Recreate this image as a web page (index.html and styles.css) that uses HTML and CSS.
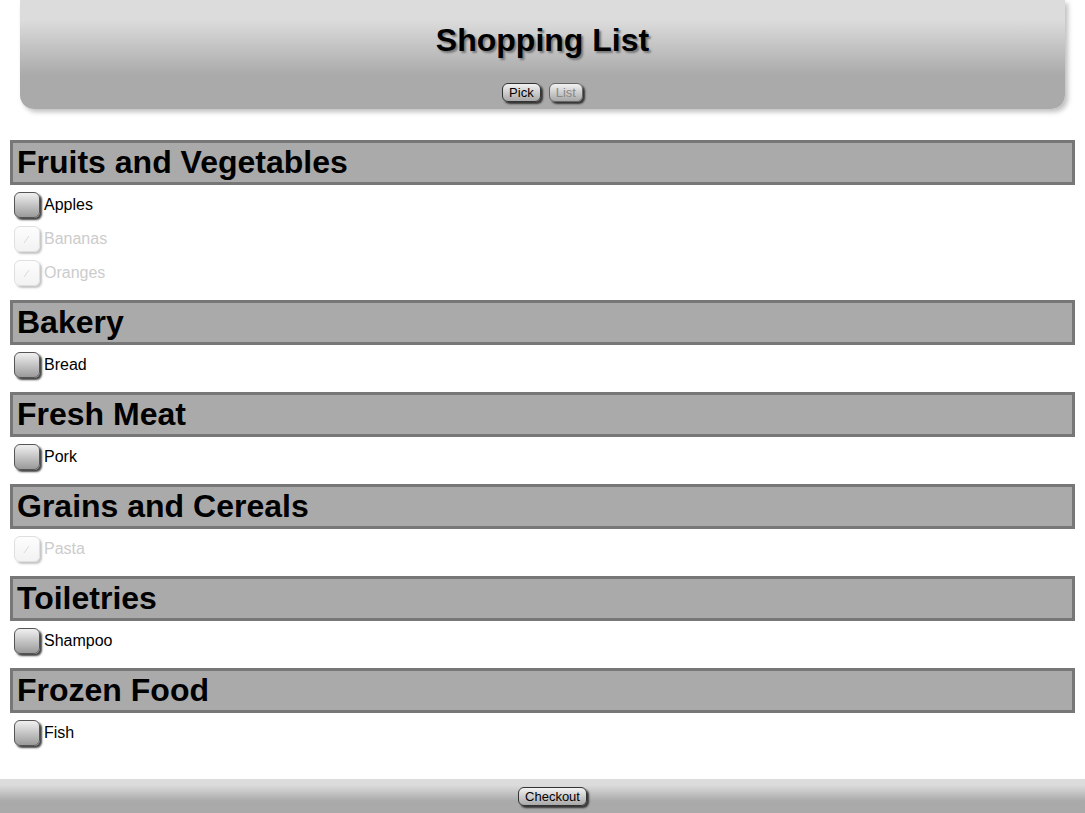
FILE: index.html
```html
<!DOCTYPE html>
<html>

<head>
    <title>Shopping List</title>
    <link rel="stylesheet" href="styles.css">
</head>

<body>
    <div class="header">
        <h1>Shopping List</h1>
        <div class="nav">
            <span class="btn">Pick</span>
            <span class="btn off">List</span>
        </div>
    </div>

    <div class="content">
        <div class="group">
            <h2>Fruits and Vegetables</h2>
            <ul>
                <li><span class="check"></span>Apples</li>
                <li class="done"><span class="check"><svg width="26" height="26" viewBox="0 0 26 26"><line x1="10" y1="17" x2="15" y2="10" /></svg></span>Bananas</li>
                <li class="done"><span class="check"><svg width="26" height="26" viewBox="0 0 26 26"><line x1="10" y1="17" x2="15" y2="10" /></svg></span>Oranges</li>
            </ul>
        </div>
        <div class="group">
            <h2>Bakery</h2>
            <ul>
                <li><span class="check"></span>Bread</li>
            </ul>
        </div>
        <div class="group">
            <h2>Fresh Meat</h2>
            <ul>
                <li><span class="check"></span>Pork</li>
            </ul>
        </div>
        <div class="group">
            <h2>Grains and Cereals</h2>
            <ul>
                <li class="done"><span class="check"><svg width="26" height="26" viewBox="0 0 26 26"><line x1="10" y1="17" x2="15" y2="10" /></svg></span>Pasta</li>
            </ul>
        </div>
        <div class="group">
            <h2>Toiletries</h2>
            <ul>
                <li><span class="check"></span>Shampoo</li>
            </ul>
        </div>
        <div class="group">
            <h2>Frozen Food</h2>
            <ul>
                <li><span class="check"></span>Fish</li>
            </ul>
        </div>
    </div>

    <div class="footer">
        <span class="btn">Checkout</span>
    </div>
</body>

</html>
```

FILE: styles.css
```css
* {
    margin: 0;
    padding: 0;
}

li {
    list-style-type: none;
}

html,
body {
    height: 100%;
}

body {
    display: flex;
    flex-direction: column;
    font-family: "Liberation Sans", Arial, sans-serif;
    background-color: #fff;
    color: #000;
}

.header {
    margin: 0 20px;
    padding-top: 22px;
    padding-bottom: 7px;
    text-align: center;
    border-radius: 0 0 14px 14px;
    background: linear-gradient(to bottom, #dcdcdc 0, #dcdcdc 20px, #aaaaaa 75px, #aaaaaa 100%);
    box-shadow: 3px 3px 5px rgba(0, 0, 0, 0.25);
}

.header h1 {
    font-size: 32px;
    line-height: 36px;
    font-weight: bold;
    text-shadow: 2px 2px 2px #777;
}

.nav {
    margin-top: 25px;
    display: flex;
    justify-content: center;
    gap: 8px;
}

.btn {
    display: inline-block;
    height: 17px;
    line-height: 17px;
    padding: 0 6px;
    font-size: 13px;
    color: #000;
    border: 1px solid #333;
    border-radius: 6px;
    background: linear-gradient(to bottom, #f2f2f2, #a8a8a8);
    box-shadow: 2px 2px 2px #333;
}

.btn.off {
    color: #888;
    border-color: #666;
}

.content {
    margin: 31px 10px 0;
}

.group h2 {
    height: 39px;
    line-height: 39px;
    padding-left: 4px;
    font-size: 32px;
    font-weight: bold;
    background-color: #aaa;
    border: 3px solid #777;
}

.group ul {
    padding: 3px 0 10px;
}

.group li {
    height: 34px;
    display: flex;
    align-items: center;
    padding-left: 4px;
    font-size: 16px;
}

.check {
    width: 24px;
    height: 24px;
    margin-right: 4px;
    border: 1px solid #555;
    border-radius: 6px;
    background: linear-gradient(to bottom, #f0f0f0, #9a9a9a);
    box-shadow: 2px 2px 2px #444;
}

.check svg {
    display: block;
    margin: -1px;
}

.check line {
    stroke: #888;
    stroke-width: 1;
}

.done {
    color: #ccc;
}

.done .check {
    opacity: 0.3;
    border-color: #999;
    background: linear-gradient(to bottom, #fafafa, #d8d8d8);
}

.footer {
    margin-top: auto;
    height: 34px;
    padding-left: 20px;
    display: flex;
    align-items: center;
    justify-content: center;
    background: linear-gradient(to bottom, #dcdcdc 0, #dcdcdc 6px, #aaaaaa 22px, #aaaaaa 100%);
}
```
